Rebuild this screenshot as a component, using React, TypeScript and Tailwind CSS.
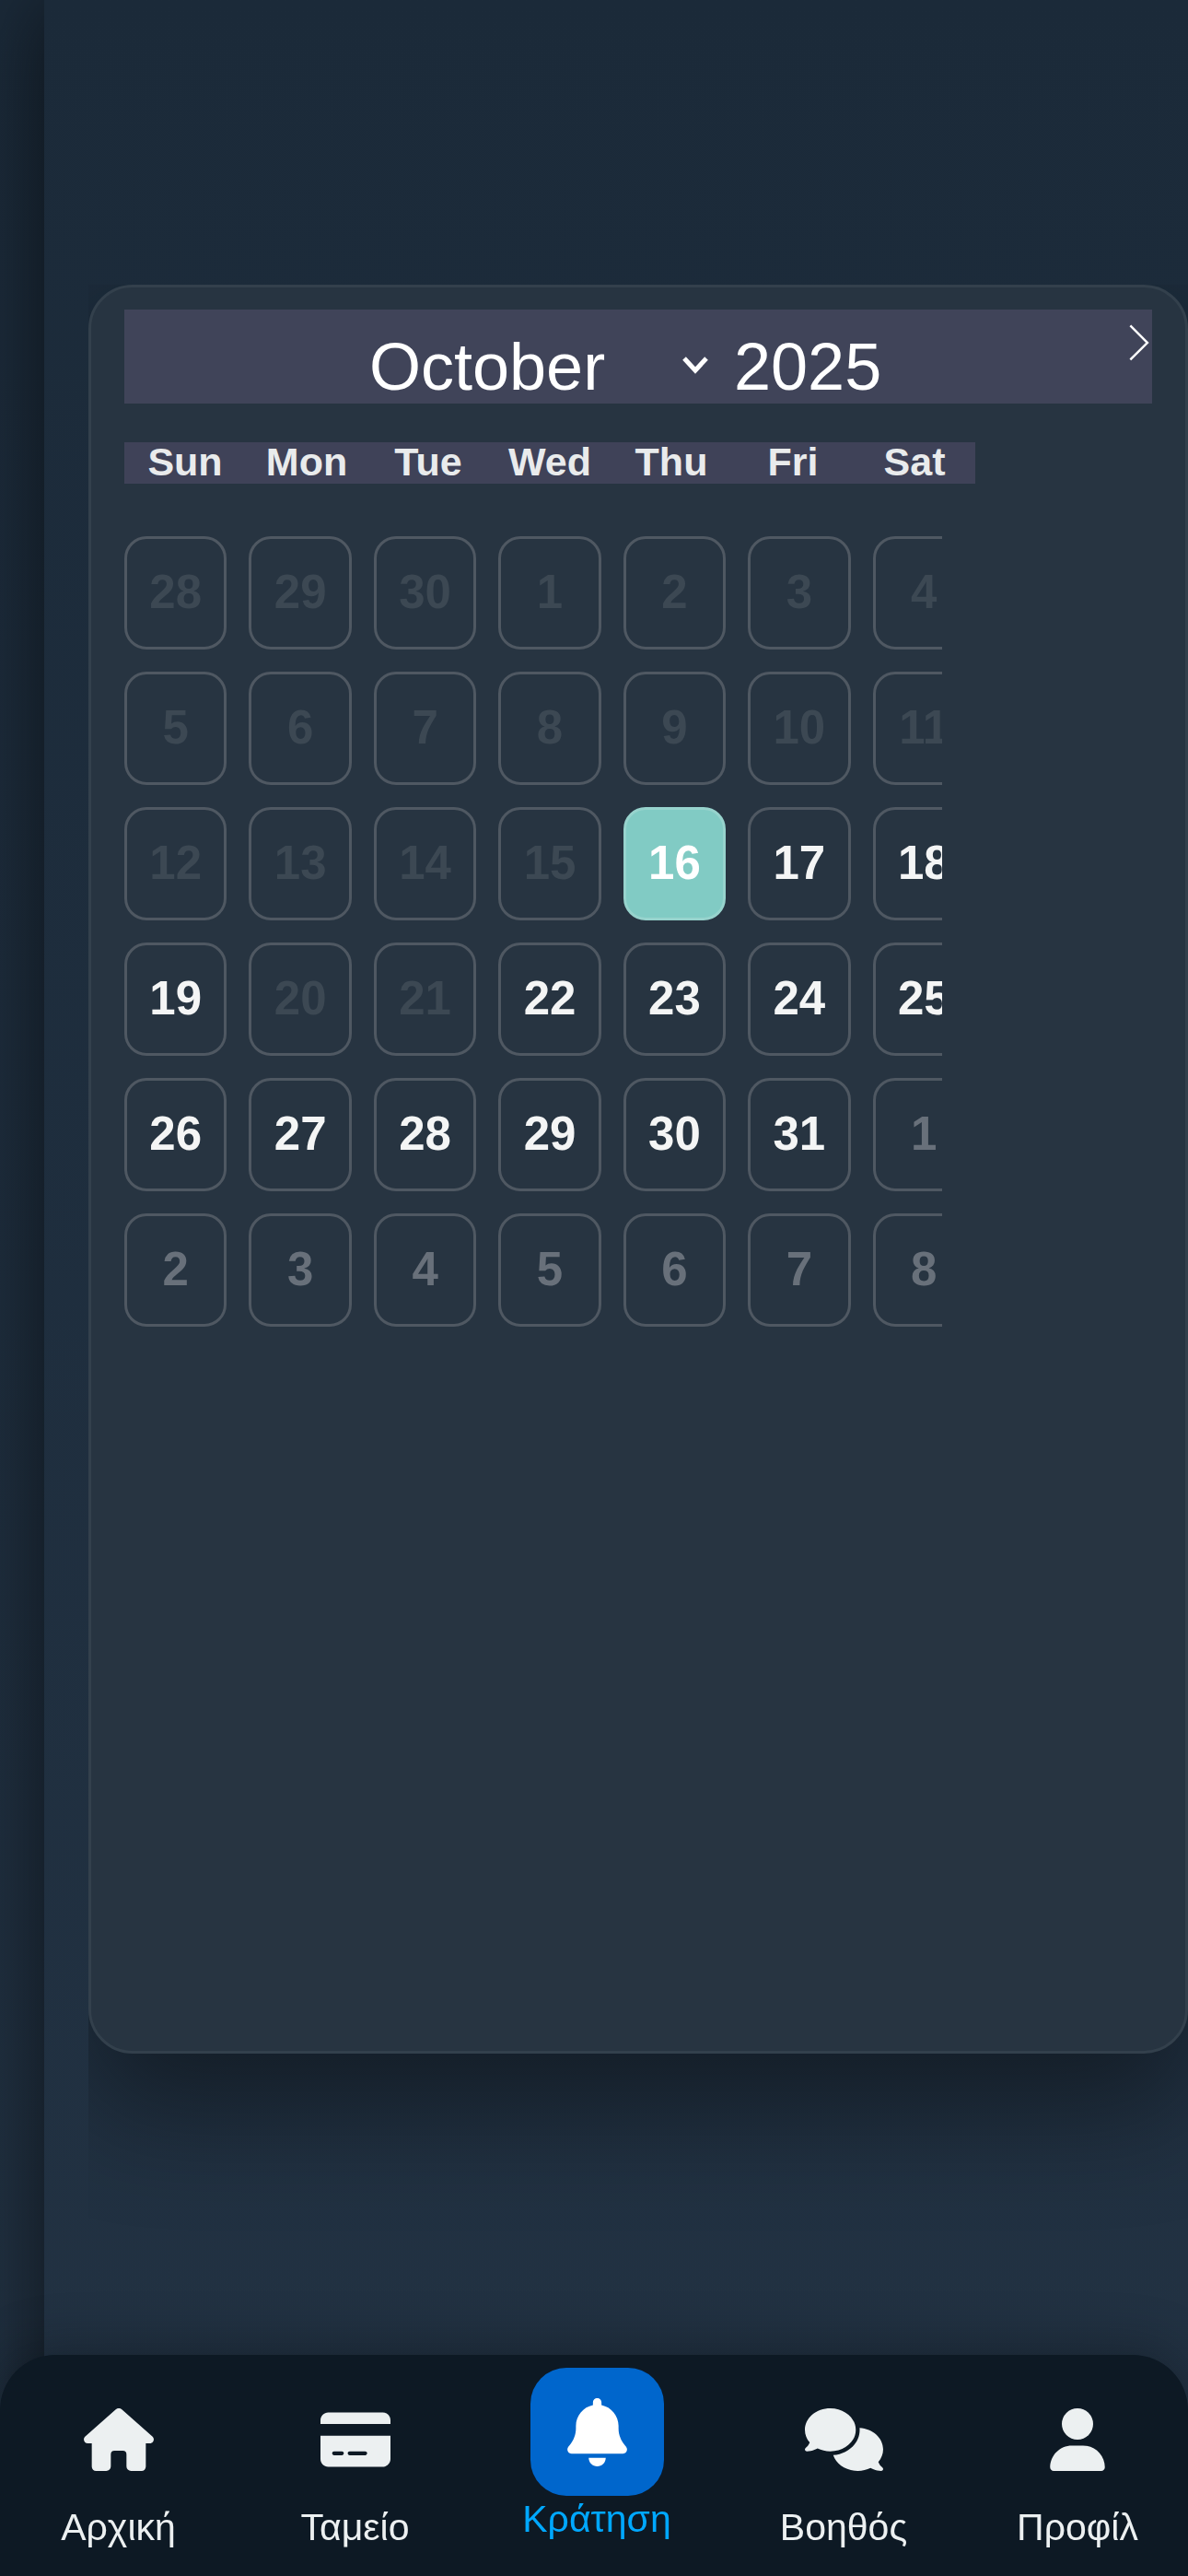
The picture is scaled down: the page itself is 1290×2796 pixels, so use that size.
import type { ReactNode } from "react";
import { FaBell, FaComments, FaCreditCard, FaUser } from "react-icons/fa6";

type DayKind = "disabled" | "open" | "selected" | "next";

const weekdays = ["Sun", "Mon", "Tue", "Wed", "Thu", "Fri", "Sat"];
const months = [
  "January", "February", "March", "April", "May", "June",
  "July", "August", "September", "October", "November", "December",
];

const dayStyles: Record<DayKind, string> = {
  disabled: "border-[#4f5862] text-[#3c4853]",
  open: "border-[#4f5862] text-[#f4f5f5]",
  selected: "border-[#97d3cd] bg-[#81cbc4] text-white",
  next: "border-[#4f5862] text-[#68707a]",
};

function kindOf(index: number): DayKind {
  const date = index - 2;
  if (date > 31) return "next";
  if (date === 16) return "selected";
  if (date < 16 || date === 20 || date === 21) return "disabled";
  return "open";
}

const days = Array.from({ length: 42 }, (_, index) => {
  const date = index - 2;
  const label = date < 1 ? date + 30 : date > 31 ? date - 31 : date;
  return { index, label, kind: kindOf(index) };
});

function HouseIcon() {
  return (
    <svg viewBox="0 0 228 204" className="h-[68px] w-[76px]" fill="currentColor" aria-hidden="true">
      <path d="M104 4a15 15 0 0 1 20 0L224 92c8 8 3 22-9 22h-13v76a14 14 0 0 1-14 14h-34a15 15 0 0 1-15-15v-39a12 12 0 0 0-12-12h-27a12 12 0 0 0-12 12v39a15 15 0 0 1-15 15H40a14 14 0 0 1-14-14v-76H13c-12 0-17-14-9-22z" />
    </svg>
  );
}

function Calendar() {
  return (
    <section className="flex-1 rounded-[48px] border-[3px] border-[#33404c] bg-[#273441] px-9 pt-6 shadow-[0_60px_120px_rgba(0,0,0,0.4)]">
      <header className="relative flex h-[102px] items-center justify-center bg-[#404459] pt-[22px] text-[72px] leading-[84px] text-white">
        <div className="mr-6 flex items-center">
          <div className="relative">
            <select
              aria-label="Month"
              defaultValue="October"
              className="block w-[372px] appearance-none bg-transparent outline-none"
            >
              {months.map((month) => (
                <option key={month} className="text-black">{month}</option>
              ))}
            </select>
            <svg viewBox="0 0 28 20" className="pointer-events-none absolute top-[30px] right-1 h-5 w-7" fill="none" stroke="white" strokeWidth="5" aria-hidden="true">
              <path d="M2 3l12 13L26 3" />
            </svg>
          </div>
          <input aria-label="Year" type="text" inputMode="numeric" defaultValue="2025" className="ml-6 block w-[164px] bg-transparent outline-none" />
        </div>
        <button type="button" aria-label="Next month" className="absolute top-[15px] right-0">
          <svg viewBox="0 0 14.571 17" className="h-[42px] w-9" fill="white" aria-hidden="true">
            <path d="M13.207 8.472l-7.854 7.854-0.707-0.707 7.146-7.146-7.146-7.148 0.707-0.707 7.854 7.854z" />
          </svg>
        </button>
      </header>

      <div className="mt-[42px] grid h-[45px] w-[924px] grid-cols-7 bg-[#3f4258] text-center text-[43px] leading-[42px] font-bold text-[#e9ebec]">
        {weekdays.map((day) => (
          <span key={day}>{day}</span>
        ))}
      </div>

      <div className="mt-[57px] w-[888px] overflow-hidden">
        <div className="grid w-[924px] grid-cols-7 gap-6">
          {days.map(({ index, label, kind }) => (
            <button
              key={index}
              type="button"
              disabled={kind === "disabled"}
              className={`h-[123px] rounded-3xl border-[3px] pb-0.5 text-[51px] leading-[60px] font-bold ${dayStyles[kind]}`}
            >
              {label}
            </button>
          ))}
        </div>
      </div>
    </section>
  );
}

function NavItem({ label, children, active = false }: { label: string; children: ReactNode; active?: boolean }) {
  return (
    <a
      href="#"
      aria-current={active ? "page" : undefined}
      className={`flex flex-col items-center text-[41px] leading-[50px] ${active ? "pt-3.5 text-[#00a8ff]" : "pt-[58px] text-[#ecf0f1]"}`}
    >
      {active ? (
        <span className="flex h-[139px] w-[145px] items-center justify-center rounded-[39px] bg-[#0066cc] text-white">
          {children}
        </span>
      ) : (
        <span className="mb-9 flex h-[68px] items-center">{children}</span>
      )}
      <span>{label}</span>
    </a>
  );
}

export default function App() {
  return (
    <div className="min-h-screen overflow-hidden bg-linear-to-b from-[#1b2a39] to-[#223243] pl-12 font-['Liberation_Sans',Arial,sans-serif]">
      <main className="flex min-h-screen flex-col bg-linear-to-b from-[#1b2a39] to-[#223243] pt-[309px] pl-12 shadow-[0_0_90px_rgba(0,0,0,0.6)]">
        <div className="flex flex-1 flex-col overflow-hidden pb-[567px]">
          <Calendar />
        </div>
      </main>

      <nav className="fixed inset-x-0 bottom-0 grid h-60 grid-cols-[257fr_257fr_268fr_268fr_240fr] rounded-t-[60px] bg-[#0d1924] shadow-[0_-6px_60px_rgba(0,0,0,0.3)]">
        <NavItem label="Αρχική"><HouseIcon /></NavItem>
        <NavItem label="Ταμείο"><FaCreditCard className="h-[68px] w-[76px]" /></NavItem>
        <NavItem label="Κράτηση" active><FaBell className="h-[74px] w-[65px]" /></NavItem>
        <NavItem label="Βοηθός"><FaComments className="h-[68px] w-[85px]" /></NavItem>
        <NavItem label="Προφίλ"><FaUser className="h-[68px] w-[60px]" /></NavItem>
      </nav>
    </div>
  );
}
